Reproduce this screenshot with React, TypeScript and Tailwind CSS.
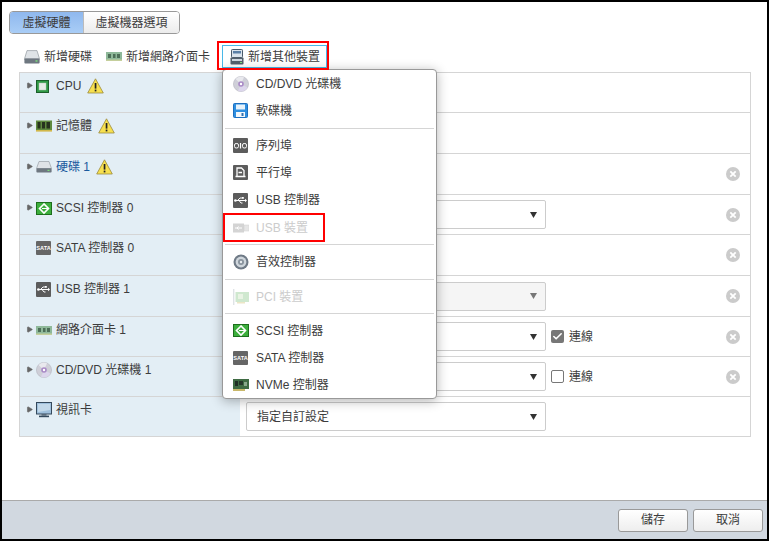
import { Check, Play } from "lucide-react";
import type { ReactNode } from "react";

const Disc = () => (
  <svg width="16" height="16" viewBox="0 0 16 16">
    <circle cx="8" cy="8" r="7.6" fill="#cfcfd8" stroke="#aeaeb8" strokeWidth="0.5" />
    <path d="M8 8 L2.5 3 A7.5 7.5 0 0 1 11 1.2 Z" fill="#e9e9ee" />
    <path d="M8 8 L14.5 11.5 A7.5 7.5 0 0 1 5 14.8 Z" fill="#dcd6ec" />
    <circle cx="8" cy="8" r="2.8" fill="#a98ac6" />
    <circle cx="8" cy="8" r="1.2" fill="#fff" />
  </svg>
);

const Floppy = () => (
  <svg width="15" height="15" viewBox="0 0 15 15">
    <rect x="0.5" y="0.5" width="14" height="14" rx="1" fill="#2f8fe0" stroke="#1d6fc0" />
    <rect x="3" y="1.5" width="9" height="5" fill="#e8f3fb" />
    <rect x="3" y="9" width="9" height="5" fill="#f4f8fb" />
    <rect x="8.5" y="10" width="2" height="3" fill="#2f6fb0" />
  </svg>
);

const DarkBox = ({ children }: { children: ReactNode }) => (
  <svg width="15" height="15" viewBox="0 0 15 15">
    <rect x="0" y="0" width="15" height="15" rx="1" fill="#5c5c5c" />
    {children}
  </svg>
);

const Serial = () => (
  <DarkBox>
    <rect x="1.5" y="5.5" width="4" height="4.5" rx="1.6" fill="none" stroke="#fff" />
    <rect x="6.9" y="5" width="1.2" height="5.5" fill="#fff" />
    <rect x="9.5" y="5.5" width="4" height="4.5" rx="1.6" fill="none" stroke="#fff" />
  </DarkBox>
);

const Parallel = () => (
  <DarkBox>
    <path d="M4 11V3h4.5L11 5.5V11M2.5 11.5h10M5.5 7.5h3.5" fill="none" stroke="#fff" strokeWidth="1.3" />
  </DarkBox>
);

const UsbIcon = () => (
  <DarkBox>
    <path d="M2 7.5h10.5M4.5 7.5l2.5-2.5h2M6 7.5l2 2.5h1.5" fill="none" stroke="#fff" />
    <path d="M12 5.8l2 1.7-2 1.7z" fill="#fff" />
    <rect x="9" y="4" width="1.8" height="1.8" fill="#fff" />
    <circle cx="2.4" cy="7.5" r="1.3" fill="#fff" />
  </DarkBox>
);

const UsbDevice = () => (
  <svg width="16" height="10" viewBox="0 0 16 10">
    <rect x="0" y="0.5" width="11" height="9" fill="#d4d4d4" />
    <rect x="11" y="2" width="5" height="6" fill="#e6e6e6" stroke="#d0d0d0" strokeWidth="0.5" />
    <path d="M2 5h7M4 5l1.5-1.6M4 5l1.5 1.6" stroke="#fff" fill="none" />
  </svg>
);

const Sound = () => (
  <svg width="16" height="16" viewBox="0 0 16 16">
    <circle cx="8" cy="8" r="7.5" fill="#6f7a86" />
    <circle cx="8" cy="8" r="5.4" fill="#cfd6dc" />
    <circle cx="8" cy="8" r="3" fill="#8a949e" />
    <circle cx="8" cy="8" r="1.2" fill="#e9edf0" />
  </svg>
);

const PciDim = () => (
  <svg width="16" height="16" viewBox="0 0 16 16">
    <rect x="0" y="0" width="1.4" height="16" fill="#dfe3e6" />
    <rect x="2.5" y="3" width="13.5" height="10" fill="#cfe8cf" />
    <rect x="5" y="5" width="5" height="5" fill="#e9f3e4" />
    <rect x="4" y="13" width="8" height="1.5" fill="#ece6c6" />
  </svg>
);

const Scsi = () => (
  <svg width="16" height="13" viewBox="0 0 16 13">
    <rect x="0.5" y="0.5" width="15" height="12" fill="#3cae3c" stroke="#1c6e1c" />
    <path d="M8 2L3.5 6.5 8 11l4.5-4.5z" fill="none" stroke="#fff" strokeWidth="1.6" />
    <path d="M6 6.5h6" stroke="#fff" />
  </svg>
);

const Sata = () => (
  <svg width="15" height="14" viewBox="0 0 15 14">
    <rect x="0" y="0" width="15" height="14" rx="1" fill="#666" />
    <text x="7.5" y="9.2" textAnchor="middle" fontSize="5.6" fontWeight="700" fill="#fff" fontFamily="Liberation Sans, sans-serif">
      SATA
    </text>
  </svg>
);

const Nvme = () => (
  <svg width="16" height="12" viewBox="0 0 16 12">
    <rect x="0" y="0" width="16" height="10" fill="#3f6b43" />
    <rect x="2" y="2" width="3" height="5" fill="#1f2f24" />
    <rect x="6" y="2" width="4" height="4" fill="#27382b" />
    <rect x="11" y="3" width="3" height="4" fill="#8aa88c" />
    <rect x="0" y="10" width="12" height="2" fill="#c9b86a" />
  </svg>
);

const Nic = () => (
  <svg width="16" height="9" viewBox="0 0 16 9">
    <rect x="0" y="0" width="16" height="9" fill="#8fb99a" />
    <rect x="2" y="2" width="3" height="4" fill="#4d6f58" />
    <rect x="7" y="2" width="2.5" height="4" fill="#4d6f58" />
    <rect x="11" y="2" width="3" height="4" fill="#4d6f58" />
    <rect x="0" y="7.5" width="16" height="1.5" fill="#c5cf9c" />
  </svg>
);

const Disk = ({ big = false }: { big?: boolean }) => (
  <svg width="16" height={big ? 14 : 12} viewBox="0 0 16 12" preserveAspectRatio="none">
    <path d="M3 0.5h10l2.5 7h-15z" fill="#dfe3e7" stroke="#8d949b" strokeWidth="0.6" />
    <rect x="0.4" y="7.2" width="15.2" height="4.4" rx="0.8" fill="#6e7780" />
    <rect x="11.5" y="8.8" width="2" height="1.2" fill="#7ce07c" />
  </svg>
);

const Other = () => (
  <svg width="14" height="16" viewBox="0 0 14 16">
    <rect x="1.5" y="0.5" width="11" height="8" rx="0.8" fill="#dbe4ec" stroke="#4a5a6a" />
    <rect x="3" y="2" width="8" height="2.5" fill="#5a7fa5" />
    <rect x="0.5" y="8.5" width="13" height="7" rx="0.8" fill="#53606c" />
    <rect x="2" y="10" width="10" height="2" fill="#cfd8e0" />
    <rect x="10" y="13" width="2" height="1" fill="#7ce07c" />
  </svg>
);

const Chip = () => (
  <svg width="13" height="13" viewBox="0 0 13 13">
    <rect x="0.5" y="0.5" width="12" height="12" fill="#2f9a45" stroke="#1c5e2a" />
    <rect x="3" y="3" width="7" height="7" fill="#e6ece6" stroke="#b8c4b8" strokeWidth="0.5" />
  </svg>
);

const Memory = () => (
  <svg width="16" height="12" viewBox="0 0 16 12">
    <rect x="0" y="0.5" width="16" height="9.5" fill="#5f8a3f" />
    <rect x="1.5" y="2" width="3" height="6.5" fill="#26331e" />
    <rect x="6" y="2" width="3" height="6.5" fill="#26331e" />
    <rect x="10.5" y="2" width="3.5" height="6.5" fill="#26331e" />
    <rect x="0" y="10" width="16" height="1.6" fill="#d2b84a" />
  </svg>
);

const Monitor = () => (
  <svg width="16" height="16" viewBox="0 0 16 16">
    <rect x="0.5" y="0.5" width="15" height="11.5" fill="#9fc0dc" stroke="#34495c" />
    <path d="M2 2h12v6L2 10z" fill="#c3d9ea" />
    <rect x="5.5" y="12" width="5" height="1.6" fill="#5a6b7a" />
    <rect x="3" y="13.6" width="10" height="1.6" fill="#34495c" />
  </svg>
);

const Warning = () => (
  <svg width="17" height="16" viewBox="0 0 17 16">
    <path d="M8.5 0.8 16.3 15H0.7z" fill="#f7e04f" stroke="#9a8a3c" strokeWidth="0.8" />
    <rect x="7.7" y="5" width="1.7" height="5.6" fill="#222" />
    <rect x="7.7" y="11.6" width="1.7" height="1.8" fill="#222" />
  </svg>
);

const RemoveIcon = () => (
  <svg width="14" height="14" viewBox="0 0 14 14">
    <circle cx="7" cy="7" r="7" fill="#cbcbcb" />
    <path d="M4.3 4.3l5.4 5.4M9.7 4.3l-5.4 5.4" stroke="#fff" strokeWidth="1.8" />
  </svg>
);

const Caret = ({ dim = false }: { dim?: boolean }) => (
  <svg width="7" height="6" viewBox="0 0 7 6" className="ml-auto mr-[8px] shrink-0">
    <path d="M0 0h7L3.5 6z" fill={dim ? "#777" : "#333"} />
  </svg>
);

const Select = ({ text = "", disabled = false }: { text?: string; disabled?: boolean }) => (
  <div
    className={`flex h-[29px] w-[300px] items-center rounded-[2px] border border-[#ccc] pl-[10px] ${
      disabled ? "bg-[#f5f5f5]" : "bg-white"
    }`}
  >
    <span>{text}</span>
    <Caret dim={disabled} />
  </div>
);

const Connected = ({ checked }: { checked: boolean }) => (
  <div className="ml-[5px] flex items-center gap-[5px]">
    {checked ? (
      <span className="flex h-[13px] w-[13px] items-center justify-center rounded-[2px] bg-[#777]">
        <Check size={11} color="#fff" strokeWidth={3.5} />
      </span>
    ) : (
      <span className="h-[13px] w-[13px] rounded-[2px] border border-[#777] bg-white" />
    )}
    <span>連線</span>
  </div>
);

const rows = [
  { h: "h-[39px]", expand: true, icon: <Chip />, label: "CPU", warn: true },
  { h: "h-[41px]", expand: true, icon: <Memory />, label: "記憶體", warn: true },
  { h: "h-[41px]", expand: true, icon: <Disk />, label: "硬碟 1", warn: true, blue: true, remove: true },
  { h: "h-[40px]", expand: true, icon: <Scsi />, label: "SCSI 控制器 0", select: true, remove: true },
  { h: "h-[41px]", icon: <Sata />, label: "SATA 控制器 0", remove: true },
  { h: "h-[41px]", icon: <UsbIcon />, label: "USB 控制器 1", select: true, disabled: true, remove: true },
  { h: "h-[40px]", expand: true, icon: <Nic />, label: "網路介面卡 1", select: true, conn: "on", remove: true },
  { h: "h-[40px]", expand: true, icon: <Disc />, label: "CD/DVD 光碟機 1", select: true, conn: "off", remove: true },
  { h: "h-[40px]", expand: true, icon: <Monitor />, label: "視訊卡", select: true, text: "指定自訂設定" },
];

type MenuEntry = { icon: ReactNode; label: string; dim?: boolean; h: string } | { sep: string };

const menu: MenuEntry[] = [
  { icon: <Disc />, label: "CD/DVD 光碟機", h: "h-[27px]" },
  { icon: <Floppy />, label: "軟碟機", h: "h-[27px]" },
  { sep: "mt-[4px]" },
  { icon: <Serial />, label: "序列埠", h: "h-[27px]" },
  { icon: <Parallel />, label: "平行埠", h: "h-[27px]" },
  { icon: <UsbIcon />, label: "USB 控制器", h: "h-[28px]" },
  { icon: <UsbDevice />, label: "USB 裝置", dim: true, h: "h-[27px]" },
  { sep: "mt-[3px]" },
  { icon: <Sound />, label: "音效控制器", h: "h-[27px]" },
  { sep: "mt-[4px]" },
  { icon: <PciDim />, label: "PCI 裝置", dim: true, h: "h-[27px]" },
  { sep: "mt-[3px]" },
  { icon: <Scsi />, label: "SCSI 控制器", h: "h-[27px]" },
  { icon: <Sata />, label: "SATA 控制器", h: "h-[27px]" },
  { icon: <Nvme />, label: "NVMe 控制器", h: "h-[27px]" },
];

export default function App() {
  return (
    <div className="relative flex h-[541px] w-[769px] flex-col overflow-hidden border-2 border-black bg-white font-['Liberation_Sans','Noto_Sans_CJK_TC',sans-serif] text-[12px] text-[#3c3c3c]">
      <div className="flex-1 pl-[7px] pt-[9px]">
        {/* Tabs */}
        <div className="flex h-[23px] w-[171px] overflow-hidden rounded-[4px] border border-[#999]">
          <div className="flex w-[73px] items-center justify-center bg-gradient-to-b from-[#8fb8ee] to-[#a9cdf6]">虛擬硬體</div>
          <div className="flex flex-1 items-center justify-center border-l border-[#bbb] bg-gradient-to-b from-white to-[#ececec]">虛擬機器選項</div>
        </div>

        {/* Toolbar */}
        <div className="mt-[11px] flex h-[23px] items-center pl-[15px]">
          <Disk big />
          <span className="ml-[4px]">新增硬碟</span>
          <span className="ml-[14px]"><Nic /></span>
          <span className="ml-[4px]">新增網路介面卡</span>
          <div className="ml-[12px] flex h-[23px] w-[105px] items-center border border-[#49b8e8] pl-[7px]">
            <Other />
            <span className="ml-[4px]">新增其他裝置</span>
          </div>
        </div>

        {/* Device table */}
        <div className="ml-[10px] mt-[4px] w-[732px] border border-[#d5d5d5]">
          {rows.map((row, i) => (
            <div key={row.label} className={`flex ${row.h} ${i > 0 ? "border-t border-[#d5d5d5]" : ""}`}>
              <div className="flex w-[220px] shrink-0 items-start bg-[#e3eef5] pl-[6px] pt-[5px]">
                <span className="flex w-[10px] justify-start pt-[4px]">
                  {row.expand && <Play size={7} fill="#666" color="#666" />}
                </span>
                <span className="flex h-[16px] w-[20px] items-center">{row.icon}</span>
                <span className={`${row.blue ? "text-[#1a5a9e]" : ""} leading-[16px]`}>{row.label}</span>
                {row.warn && <span className="ml-[6px]"><Warning /></span>}
              </div>
              <div className="flex flex-1 items-center pl-[6px] pr-[10px]">
                {row.select && <Select text={row.text} disabled={row.disabled} />}
                {row.conn && <Connected checked={row.conn === "on"} />}
                {row.remove && <span className="ml-auto"><RemoveIcon /></span>}
              </div>
            </div>
          ))}
        </div>
      </div>

      {/* Footer */}
      <div className="flex h-[39px] items-center justify-end gap-[5px] border-t border-[#aaa] bg-[#d1d8e0] pr-[4px]">
        <button className="h-[23px] w-[70px] rounded-[3px] border border-[#999] bg-gradient-to-b from-white to-[#eee]">儲存</button>
        <button className="h-[23px] w-[70px] rounded-[3px] border border-[#999] bg-gradient-to-b from-white to-[#eee]">取消</button>
      </div>

      {/* Add-device dropdown */}
      <div className="absolute left-[220px] top-[67px] w-[215px] rounded-[4px] border border-[#999] bg-white shadow-[0_2px_12px_rgba(0,0,0,0.3)]">
        {menu.map((item, i) =>
          "sep" in item ? (
            <div key={i} className={`mx-[2px] mb-[3px] h-[1px] bg-[#d5d5d5] ${item.sep}`} />
          ) : (
            <div key={item.label} className={`flex ${item.h} items-center ${item.dim ? "text-[#ccc]" : ""}`}>
              <span className="flex w-[33px] shrink-0 justify-center pl-[2px]">{item.icon}</span>
              <span>{item.label}</span>
            </div>
          )
        )}
      </div>

      {/* Red annotation boxes */}
      <div className="absolute left-[215px] top-[39px] h-[29px] w-[112px] border-2 border-[#f00]" />
      <div className="absolute left-[221px] top-[211px] h-[29px] w-[102px] border-2 border-[#f00]" />
    </div>
  );
}
